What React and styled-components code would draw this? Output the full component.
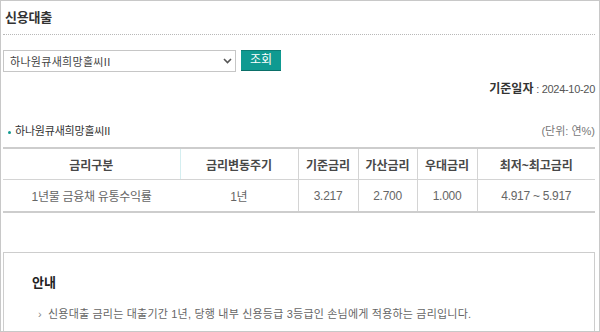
import React from "react";
import styled, { createGlobalStyle } from "styled-components";

const rows = [
  {
    type: "1년물 금융채 유통수익률",
    cycle: "1년",
    base: "3.217",
    add: "2.700",
    pref: "1.000",
    range: "4.917 ~ 5.917",
  },
];

function App() {
  return (
    <>
      <GlobalStyle />
      <Frame>
        <Title>신용대출</Title>
        <Divider />
        <SearchRow>
          <SelectBox>
            <span>하나원큐새희망홀씨II</span>
            <svg width="9" height="6" viewBox="0 0 9 6">
              <path d="M1 1l3.5 3.5L8 1" fill="none" stroke="#555" strokeWidth="1.6" />
            </svg>
          </SelectBox>
          <SearchButton>조회</SearchButton>
        </SearchRow>
        <BaseDate>
          <strong>기준일자</strong> : 2024-10-20
        </BaseDate>
        <SubHeader>
          <ProductName>하나원큐새희망홀씨II</ProductName>
          <Unit>(단위: 연%)</Unit>
        </SubHeader>
        <RateTable>
          <colgroup>
            <col style={{ width: 177 }} />
            <col style={{ width: 118 }} />
            <col style={{ width: 60 }} />
            <col style={{ width: 59 }} />
            <col style={{ width: 60 }} />
            <col />
          </colgroup>
          <thead>
            <tr>
              <Th $accent>금리구분</Th>
              <Th>금리변동주기</Th>
              <Th>기준금리</Th>
              <Th>가산금리</Th>
              <Th>우대금리</Th>
              <Th $last>최저~최고금리</Th>
            </tr>
          </thead>
          <tbody>
            {rows.map((row) => (
              <tr key={row.type}>
                <Td $open>{row.type}</Td>
                <Td>{row.cycle}</Td>
                <Td>{row.base}</Td>
                <Td>{row.add}</Td>
                <Td>{row.pref}</Td>
                <Td $last>{row.range}</Td>
              </tr>
            ))}
          </tbody>
        </RateTable>
        <InfoBox>
          <InfoTitle>안내</InfoTitle>
          <InfoList>
            <li>신용대출 금리는 대출기간 1년, 당행 내부 신용등급 3등급인 손님에게 적용하는 금리입니다.</li>
          </InfoList>
        </InfoBox>
      </Frame>
    </>
  );
}

export default App;

/*
  Styles
*/

const GlobalStyle = createGlobalStyle`
  body {
    margin: 0;
    background: #fff;
    font-family: "Liberation Sans", "Noto Sans CJK KR", sans-serif;
    color: #333;
  }
`;

const Frame = styled.div`
  box-sizing: border-box;
  width: 600px;
  height: 332px;
  border: 1px solid #c8c8c8;
  padding: 0 4px 0 2px;
  overflow: hidden;
`;

const Title = styled.h1`
  margin: 0;
  height: 25px;
  padding: 8px 0 0 2px;
  font-size: 13px;
  line-height: 18px;
  font-weight: bold;
  color: #333;
  letter-spacing: -0.2px;
`;

const Divider = styled.hr`
  margin: 0;
  border: 0;
  border-top: 1px dotted #b8b8b8;
`;

const SearchRow = styled.div`
  display: flex;
  gap: 5px;
  margin-top: 15px;
`;

const SelectBox = styled.div`
  box-sizing: border-box;
  width: 233px;
  height: 22px;
  border: 1px solid #c6c6c6;
  display: flex;
  align-items: center;
  justify-content: space-between;
  padding: 0 3px 0 6px;
  font-size: 11px;
  color: #444;
  letter-spacing: 0.3px;
`;

const SearchButton = styled.button`
  box-sizing: border-box;
  width: 40px;
  height: 21px;
  padding: 0;
  border: 0;
  border-bottom: 1px solid #0b6f68;
  border-top: 1px solid #0b7d75;
  background: #0f9a91;
  color: #fff;
  font-family: inherit;
  font-size: 12px;
  line-height: 19px;
`;

const BaseDate = styled.div`
  margin-top: 9px;
  line-height: 16px;
  text-align: right;
  font-size: 11px;
  color: #555;
  letter-spacing: -0.3px;

  strong {
    font-size: 12px;
    color: #333;
    letter-spacing: 0;
  }
`;

const SubHeader = styled.div`
  display: flex;
  justify-content: space-between;
  align-items: center;
  margin-top: 25px;
  height: 16px;
  padding-left: 5px;
`;

const ProductName = styled.span`
  font-size: 11px;
  color: #333;
  letter-spacing: -0.2px;

  &::before {
    content: "";
    display: inline-block;
    width: 3px;
    height: 3px;
    border-radius: 50%;
    background: #119a90;
    margin-right: 4px;
    vertical-align: middle;
  }
`;

const Unit = styled.span`
  font-size: 11px;
  color: #777;
`;

const RateTable = styled.table`
  width: 592px;
  margin-top: 9px;
  border-collapse: collapse;
  table-layout: fixed;
  border-top: 2px solid #cdcdcd;
  border-bottom: 2px solid #cdcdcd;
`;

const Th = styled.th`
  height: 30px;
  padding: 0;
  font-size: 12px;
  font-weight: bold;
  color: #484848;
  text-align: center;
  border-bottom: 1px solid #d4d4d4;
  border-right: ${({ $last, $accent }) =>
    $last ? "0" : $accent ? "1px solid #d4eef0" : "1px solid #d4d4d4"};
`;

const Td = styled.td`
  height: 31px;
  padding: 0;
  font-size: 12px;
  color: #666;
  text-align: center;
  letter-spacing: -0.3px;
  border-right: ${({ $last, $open }) =>
    $last || $open ? "0" : "1px solid #d4d4d4"};
`;

const InfoBox = styled.section`
  box-sizing: border-box;
  margin-top: 39px;
  width: 592px;
  height: 100px;
  border: 1px solid #cdcdcd;
  padding: 21px 0 0 28px;
`;

const InfoTitle = styled.h2`
  margin: 0;
  font-size: 13px;
  line-height: 18px;
  font-weight: bold;
  color: #222;
`;

const InfoList = styled.ul`
  margin: 14px 0 0;
  padding: 0 0 0 16px;
  list-style: none;

  li {
    position: relative;
    font-size: 11px;
    line-height: 16px;
    color: #666;
    letter-spacing: 0.2px;
  }

  li::before {
    content: "›";
    position: absolute;
    left: -10px;
    color: #888;
  }
`;
